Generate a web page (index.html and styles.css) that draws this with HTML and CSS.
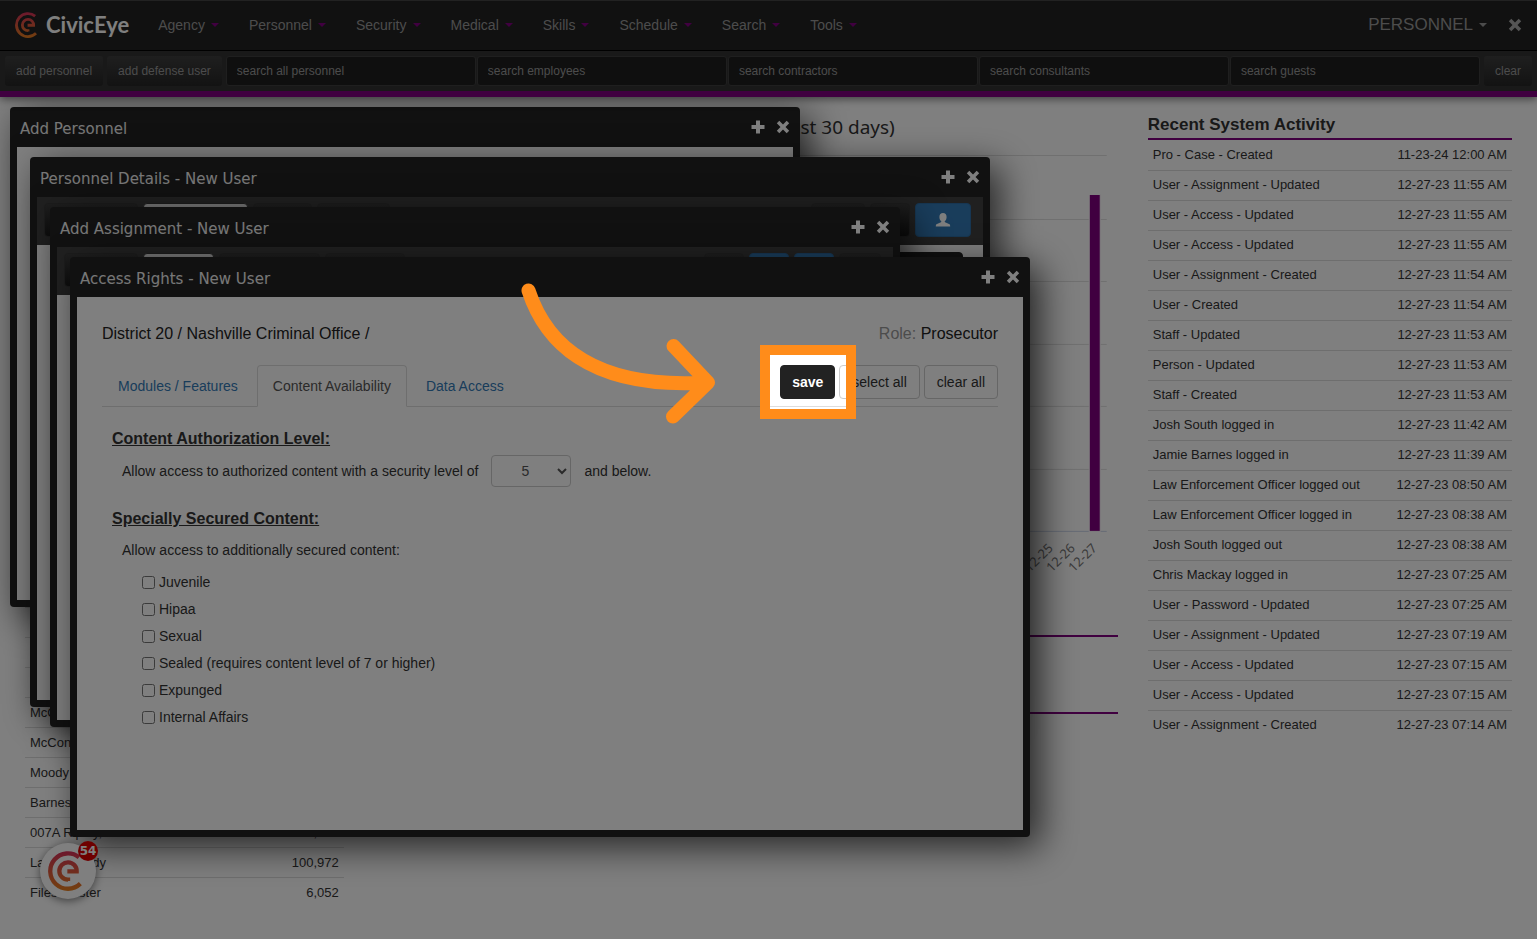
FILE: index.html
```html
<!DOCTYPE html>
<html lang="en">
<head>
    <meta charset="UTF-8">
    <meta name="viewport" content="width=device-width, initial-scale=1.0">
    <title>CivicEye - Personnel</title>
    <link rel="stylesheet" href="styles.css">
</head>
<body>

<svg class="defs" width="0" height="0" aria-hidden="true">
    <defs>
        <linearGradient id="brand" x1="0" y1="0" x2="0" y2="120" gradientUnits="userSpaceOnUse">
            <stop offset="0" stop-color="#d8305a"/>
            <stop offset="1" stop-color="#e8801f"/>
        </linearGradient>
        <symbol id="mark" viewBox="0 0 120 120">
            <g fill="none" stroke="url(#brand)" stroke-width="13">
                <path d="M93 19 A53 53 0 1 0 97 98"/>
                <path d="M60 90 V86 A26 26 0 1 1 86 61 H58"/>
            </g>
        </symbol>
        <symbol id="plus" viewBox="0 0 14 14">
            <path d="M5 0.5h4v4.5h4.5v4H9v4.5H5V9H0.5V5H5z"/>
        </symbol>
        <symbol id="times" viewBox="0 0 14 14">
            <path d="M3.3 0.8 7 4.500 10.700 0.800 13.200 3.300 9.500 7 13.200 10.700 10.700 13.200 7 9.500 3.300 13.200 0.800 10.700 4.500 7 0.800 3.300z"/>
        </symbol>
        <symbol id="user" viewBox="0 0 16 16">
            <path d="M8 1C5.800 1 4.400 2.600 4.400 4.900c0 1.700.700 3.300 1.700 4.200.3.300.2 1-.2 1.200L2 12.100c-.9.400-1.200 1-1.200 2.400h14.400c0-1.400-.3-2-1.200-2.400l-3.900-1.800c-.4-.2-.5-.9-.2-1.200 1-.9 1.700-2.500 1.700-4.200C11.600 2.600 10.200 1 8 1z"/>
        </symbol>
    </defs>
</svg>

<header class="header">
    <nav class="navbar">
        <a class="brand" href="#"><svg class="brand-mark"><use href="#mark"/></svg>CivicEye</a>
        <a class="nav-link" href="#">Agency<span class="caret"></span></a>
        <a class="nav-link" href="#">Personnel<span class="caret"></span></a>
        <a class="nav-link" href="#">Security<span class="caret"></span></a>
        <a class="nav-link" href="#">Medical<span class="caret"></span></a>
        <a class="nav-link" href="#">Skills<span class="caret"></span></a>
        <a class="nav-link" href="#">Schedule<span class="caret"></span></a>
        <a class="nav-link" href="#">Search<span class="caret"></span></a>
        <a class="nav-link" href="#">Tools<span class="caret"></span></a>
        <a class="nav-link module" href="#">PERSONNEL<span class="caret"></span></a>
        <button class="icon-button close-module" aria-label="Close"><svg class="icon"><use href="#times"/></svg></button>
    </nav>
    <div class="searchbar">
        <button class="bar-button">add personnel</button>
        <button class="bar-button">add defense user</button>
        <div class="search-fields">
            <input type="text" placeholder="search all personnel" aria-label="search all personnel">
            <input type="text" placeholder="search employees" aria-label="search employees">
            <input type="text" placeholder="search contractors" aria-label="search contractors">
            <input type="text" placeholder="search consultants" aria-label="search consultants">
            <input type="text" placeholder="search guests" aria-label="search guests">
        </div>
        <button class="bar-button">clear</button>
    </div>
</header>

<main class="dashboard">
    <div class="overview">
        <svg class="chart" viewBox="0 0 1093 494">
            <text class="chart-title" x="870" y="37" text-anchor="end">(last 30 days)</text>
            <g class="chart-grid">
                <path d="M0 58.500H1082M0 122.500H1082M0 184.500H1082M0 247.500H1082M0 309.500H1082M0 372.500H1082"/>
                <path class="chart-axis" d="M0 434.500H1082"/>
            </g>
            <rect class="chart-bar" x="1064.500" y="97.500" width="11" height="337"/>
            <g class="chart-labels" text-anchor="end">
                <text transform="translate(1029 452) rotate(-45)">12-25</text>
                <text transform="translate(1051 452) rotate(-45)">12-26</text>
                <text transform="translate(1073 452) rotate(-45)">12-27</text>
            </g>
        </svg>
        <div class="panels">
            <table class="list">
                <tbody>
                    <tr><td>&nbsp;</td><td></td></tr>
                    <tr><td>&nbsp;</td><td></td></tr>
                    <tr><td>&nbsp;</td><td></td></tr>
                    <tr><td>&nbsp;</td><td></td></tr>
                    <tr><td>McCall</td><td></td></tr>
                    <tr><td>McConnell</td><td></td></tr>
                    <tr><td>Moody</td><td></td></tr>
                    <tr><td>Barnes</td><td></td></tr>
                    <tr><td>007A Ripley, Jason</td><td>1,204</td></tr>
                    <tr><td>Laura Moody</td><td>100,972</td></tr>
                    <tr><td>Files Master</td><td>6,052</td></tr>
                </tbody>
            </table>
            <div class="sections">
                <div class="section"></div>
                <div class="section"></div>
            </div>
        </div>
    </div>
    <section class="activity">
        <h2>Recent System Activity</h2>
        <table class="list">
            <tbody>
                <tr><td>Pro - Case - Created</td><td>11-23-24 12:00 AM</td></tr>
                <tr><td>User - Assignment - Updated</td><td>12-27-23 11:55 AM</td></tr>
                <tr><td>User - Access - Updated</td><td>12-27-23 11:55 AM</td></tr>
                <tr><td>User - Access - Updated</td><td>12-27-23 11:55 AM</td></tr>
                <tr><td>User - Assignment - Created</td><td>12-27-23 11:54 AM</td></tr>
                <tr><td>User - Created</td><td>12-27-23 11:54 AM</td></tr>
                <tr><td>Staff - Updated</td><td>12-27-23 11:53 AM</td></tr>
                <tr><td>Person - Updated</td><td>12-27-23 11:53 AM</td></tr>
                <tr><td>Staff - Created</td><td>12-27-23 11:53 AM</td></tr>
                <tr><td>Josh South logged in</td><td>12-27-23 11:42 AM</td></tr>
                <tr><td>Jamie Barnes logged in</td><td>12-27-23 11:39 AM</td></tr>
                <tr><td>Law Enforcement Officer logged out</td><td>12-27-23 08:50 AM</td></tr>
                <tr><td>Law Enforcement Officer logged in</td><td>12-27-23 08:38 AM</td></tr>
                <tr><td>Josh South logged out</td><td>12-27-23 08:38 AM</td></tr>
                <tr><td>Chris Mackay logged in</td><td>12-27-23 07:25 AM</td></tr>
                <tr><td>User - Password - Updated</td><td>12-27-23 07:25 AM</td></tr>
                <tr><td>User - Assignment - Updated</td><td>12-27-23 07:19 AM</td></tr>
                <tr><td>User - Access - Updated</td><td>12-27-23 07:15 AM</td></tr>
                <tr><td>User - Access - Updated</td><td>12-27-23 07:15 AM</td></tr>
                <tr><td>User - Assignment - Created</td><td>12-27-23 07:14 AM</td></tr>
            </tbody>
        </table>
    </section>
</main>

<section class="window window-personnel">
    <div class="titlebar">
        <h3>Add Personnel</h3>
        <button class="icon-button" aria-label="Expand"><svg class="icon"><use href="#plus"/></svg></button>
        <button class="icon-button" aria-label="Close"><svg class="icon"><use href="#times"/></svg></button>
    </div>
    <div class="window-body"></div>
</section>

<section class="window window-details">
    <div class="titlebar">
        <h3>Personnel Details - New User</h3>
        <button class="icon-button" aria-label="Expand"><svg class="icon"><use href="#plus"/></svg></button>
        <button class="icon-button" aria-label="Close"><svg class="icon"><use href="#times"/></svg></button>
    </div>
    <div class="window-body">
        <div class="toolbar">
            <button class="tool"></button>
            <button class="tool active"></button>
            <button class="tool"></button>
            <button class="tool"></button>
            <span></span>
            <button class="tool"></button>
            <button class="tool"></button>
            <button class="tool primary" aria-label="User"><svg class="icon-user"><use href="#user"/></svg></button>
        </div>
        <div class="details">
            <button class="btn btn-dark btn-wide"></button>
        </div>
    </div>
</section>

<section class="window window-assignment">
    <div class="titlebar">
        <h3>Add Assignment - New User</h3>
        <button class="icon-button" aria-label="Expand"><svg class="icon"><use href="#plus"/></svg></button>
        <button class="icon-button" aria-label="Close"><svg class="icon"><use href="#times"/></svg></button>
    </div>
    <div class="window-body">
        <div class="toolbar">
            <button class="tool"></button>
            <button class="tool active"></button>
            <button class="tool"></button>
            <button class="tool"></button>
            <span></span>
            <button class="tool"></button>
            <button class="tool primary"></button>
            <button class="tool primary"></button>
            <button class="tool"></button>
        </div>
    </div>
</section>

<section class="window window-access">
    <div class="titlebar">
        <h3>Access Rights - New User</h3>
        <button class="icon-button" aria-label="Expand"><svg class="icon"><use href="#plus"/></svg></button>
        <button class="icon-button" aria-label="Close"><svg class="icon"><use href="#times"/></svg></button>
    </div>
    <div class="window-body access">
        <div class="access-head">
            <span>District 20 / Nashville Criminal Office /</span>
            <span><span class="muted">Role:</span> Prosecutor</span>
        </div>
        <div class="tabs">
            <a class="tab" href="#">Modules / Features</a>
            <a class="tab active" href="#">Content Availability</a>
            <a class="tab" href="#">Data Access</a>
            <div class="actions">
                <button class="btn btn-dark">save</button>
                <button class="btn">select all</button>
                <button class="btn">clear all</button>
            </div>
        </div>
        <form class="rights">
            <h4>Content Authorization Level:</h4>
            <div class="level">
                <label for="level">Allow access to authorized content with a security level of</label>
                <select id="level">
                    <option>1</option>
                    <option>2</option>
                    <option>3</option>
                    <option>4</option>
                    <option selected>5</option>
                    <option>6</option>
                    <option>7</option>
                </select>
                <span>and below.</span>
            </div>
            <h4>Specially Secured Content:</h4>
            <p>Allow access to additionally secured content:</p>
            <div class="checks">
                <label><input type="checkbox"> Juvenile</label>
                <label><input type="checkbox"> Hipaa</label>
                <label><input type="checkbox"> Sexual</label>
                <label><input type="checkbox"> Sealed (requires content level of 7 or higher)</label>
                <label><input type="checkbox"> Expunged</label>
                <label><input type="checkbox"> Internal Affairs</label>
            </div>
        </form>
    </div>
</section>

<button class="help" aria-label="Help">
    <svg class="help-mark"><use href="#mark"/></svg>
    <span class="help-count">54</span>
</button>

<!-- walkthrough: dims the page around the save button -->
<div class="spotlight"></div>
<svg class="arrow" viewBox="0 0 200 150" aria-hidden="true">
    <path d="M8.500 10.500 C24 58 66 110 187 102.500 M153.500 66 L188 102.500 L153 136.500"/>
</svg>

</body>
</html>
```
FILE: styles.css
```css
* {
    box-sizing: border-box;
}
body {
    position: relative;
    margin: 0;
    min-height: 100vh;
    overflow: hidden;
    background: #fff;
    color: #333;
    font: 14px/20px "Liberation Sans", Arial, sans-serif;
}
button, input, select {
    font-family: inherit;
}
button {
    cursor: pointer;
}
a {
    color: #337ab7;
    text-decoration: none;
}
.defs {
    position: absolute;
}

/* header */
.header {
    position: relative;
    z-index: 1;
    border-bottom: 6px solid #800080;
    box-shadow: 0 2px 8px rgba(0, 0, 0, 0.5);
}
.navbar {
    display: flex;
    align-items: center;
    height: 51px;
    padding: 0 10px 2px 15px;
    background: #222;
    border-top: 1px solid #444;
    border-bottom: 1px solid #000;
}
.brand {
    display: flex;
    align-items: center;
    gap: 5px;
    margin-right: 14px;
    color: #fff;
    font: bold 22px/26px Lato, sans-serif;
}
.brand-mark {
    width: 26px;
    height: 26px;
}
.nav-link {
    display: flex;
    align-items: center;
    padding: 0 15px;
    color: #999;
}
.caret {
    margin-left: 6px;
    border-top: 4px solid #800080;
    border-left: 4px solid transparent;
    border-right: 4px solid transparent;
}
.module {
    margin-left: auto;
    font-size: 17px;
}
.module .caret {
    border-top-color: #999;
}
.icon-button {
    display: flex;
    align-items: center;
    justify-content: center;
    width: 25px;
    height: 24px;
    padding: 0;
    background: none;
    border: 0;
    fill: #fff;
}
.close-module {
    fill: #aaa;
}
.icon {
    display: block;
    width: 14px;
    height: 14px;
}
.searchbar {
    display: flex;
    gap: 4px;
    padding: 5px;
    height: 40px;
    background: #333;
}
.bar-button {
    padding: 0 11px;
    background: linear-gradient(#3e3e3e, #262626);
    border: 0;
    border-radius: 3px;
    color: #999;
    font-size: 12px;
}
.search-fields {
    display: flex;
    flex: 1;
    gap: 1px;
}
.search-fields input {
    flex: 1;
    min-width: 0;
    padding: 0 10px;
    background: #1f1f1f;
    border: 1px solid #3e3e3e;
    border-radius: 3px;
    font-size: 12px;
}
.search-fields input::placeholder {
    color: #999;
}

/* dashboard */
.dashboard {
    display: grid;
    grid-template-columns: 3fr 1fr;
    gap: 30px;
    padding: 0 25px;
}
.chart {
    display: block;
    width: 100%;
    font-family: "Noto Sans", sans-serif;
}
.chart-title {
    font-size: 19px;
    fill: #333;
}
.chart-grid {
    fill: none;
    stroke: #e0e0e0;
}
.chart-axis {
    stroke: #ccd6eb;
}
.chart-bar {
    fill: #800080;
    stroke: #fff;
}
.chart-labels {
    font-size: 13px;
    fill: #777;
}
.panels {
    display: grid;
    grid-template-columns: 3fr 7fr;
    gap: 30px;
    margin-top: -13px;
}
.section {
    height: 77px;
    border-bottom: 2px solid #800080;
}
.section:first-child {
    height: 59px;
}
.activity h2 {
    margin: 0;
    padding-top: 14px;
    border-bottom: 2px solid #800080;
    font-size: 17px;
    line-height: 27px;
}
.list {
    width: 100%;
    border-collapse: collapse;
    font-size: 13px;
}
.list td {
    height: 30px;
    padding: 0 5px;
    border-bottom: 1px solid #ddd;
}
.list tr:last-child td {
    border-bottom: 0;
}
.list td:last-child {
    text-align: right;
}

/* windows */
.window {
    position: absolute;
    display: flex;
    flex-direction: column;
    padding: 0 7px 7px;
    background: #222;
    border-radius: 4px;
    box-shadow: 10px 10px 36px rgba(0, 0, 0, 0.7);
}
.window-personnel {
    left: 10px;
    top: 107px;
    width: 790px;
    height: 500px;
}
.window-details {
    left: 30px;
    top: 157px;
    width: 960px;
    height: 550px;
}
.window-assignment {
    left: 50px;
    top: 207px;
    width: 850px;
    height: 520px;
}
.window-access {
    left: 70px;
    top: 257px;
    width: 960px;
    height: 580px;
}
.titlebar {
    display: flex;
    align-items: center;
    height: 40px;
    padding: 0 0 0 3px;
}
.titlebar h3 {
    flex: 1;
    margin: 0;
    padding-top: 4px;
    color: #eee;
    font: 15px/20px "DejaVu Sans", Verdana, sans-serif;
}
.titlebar .icon-button:last-child {
    margin-right: -2px;
}
.window-body {
    flex: 1;
    background: #fff;
}
.toolbar {
    display: grid;
    gap: 5px;
    height: 48px;
    padding: 6px 12px 8px 7px;
    background: #404040;
}
.window-details .toolbar {
    grid-template-columns: 94px 105px 59px 73px 1fr 54px 40px 56px;
}
.window-assignment .toolbar {
    grid-template-columns: 74px 71px 101px 80px 1fr 40px 40px 40px 42px;
}
.tool {
    padding: 0;
    background: linear-gradient(#3c3c3c, #1c1c1c);
    border: 1px solid #383838;
    border-radius: 4px;
}
.tool.active {
    background: #eee;
}
.tool.primary {
    background: #337ab7;
    border-color: #2e6da4;
    fill: #fff;
}
.icon-user {
    display: block;
    width: 16px;
    height: 16px;
    margin: 0 auto;
}
.details {
    display: flex;
    justify-content: flex-end;
    padding: 7px 20px;
}

/* access rights */
.access {
    padding: 25px;
}
.access-head {
    display: flex;
    justify-content: space-between;
    margin-bottom: 20px;
    color: #222;
    font-size: 16px;
    line-height: 23px;
}
.muted {
    color: #999;
}
.tabs {
    display: flex;
    gap: 3px;
    height: 42px;
    border-bottom: 1px solid #ddd;
}
.tab {
    height: 42px;
    padding: 10px 15px;
    border: 1px solid transparent;
    border-radius: 4px 4px 0 0;
}
.tab.active {
    background: #fff;
    border-color: #ddd #ddd #fff;
    color: #555;
}
.actions {
    display: flex;
    gap: 4px;
    margin-left: auto;
}
.btn {
    height: 34px;
    padding: 0 12px;
    background: #fff;
    border: 1px solid #ccc;
    border-radius: 4px;
    color: #333;
    font-size: 14px;
}
.btn-dark {
    padding: 0 11px;
    background: #222;
    border-color: #222;
    color: #fff;
    font-weight: bold;
}
.btn-wide {
    width: 130px;
}
.rights {
    padding: 20px 10px;
}
.rights h4 {
    margin: 0;
    font-size: 16px;
    line-height: 24px;
    text-decoration: underline;
}
.level {
    display: flex;
    align-items: center;
    gap: 13px;
    margin: 4px 0 20px;
    padding-left: 10px;
}
.level select {
    width: 80px;
    height: 32px;
    background: #fff;
    border: 1px solid #ccc;
    border-radius: 4px;
    color: #555;
    font-size: 14px;
    text-align: center;
}
.rights p {
    margin: 9px 0 10px;
    padding-left: 10px;
}
.checks {
    display: flex;
    flex-direction: column;
    gap: 7px;
    padding: 2px 0 0 30px;
}
.checks label {
    display: flex;
    align-items: center;
    gap: 4px;
}
.checks input {
    width: 13px;
    height: 13px;
    margin: 0;
}

/* help button */
.help {
    position: absolute;
    left: 40px;
    top: 843px;
    width: 56px;
    height: 56px;
    padding: 8px;
    background: #fff;
    border: 0;
    border-radius: 50%;
    box-shadow: 0 2px 8px rgba(0, 0, 0, 0.5);
}
.help-mark {
    display: block;
    width: 40px;
    height: 40px;
}
.help-count {
    position: absolute;
    right: -2px;
    top: -2px;
    width: 20px;
    height: 20px;
    background: #d00;
    border-radius: 50%;
    color: #fff;
    font: bold 12px/20px "DejaVu Sans", sans-serif;
    text-align: center;
}

/* walkthrough */
.spotlight {
    position: absolute;
    z-index: 2;
    left: 760px;
    top: 345px;
    width: 96px;
    height: 74px;
    border: 10px solid #ff8c1a;
    box-shadow: 0 0 0 3000px rgba(0, 0, 0, 0.5);
    pointer-events: none;
}
.arrow {
    position: absolute;
    z-index: 2;
    left: 520px;
    top: 280px;
    width: 200px;
    height: 150px;
    fill: none;
    stroke: #ff8c1a;
    stroke-width: 14px;
    stroke-linecap: round;
    stroke-linejoin: round;
    pointer-events: none;
}
```
